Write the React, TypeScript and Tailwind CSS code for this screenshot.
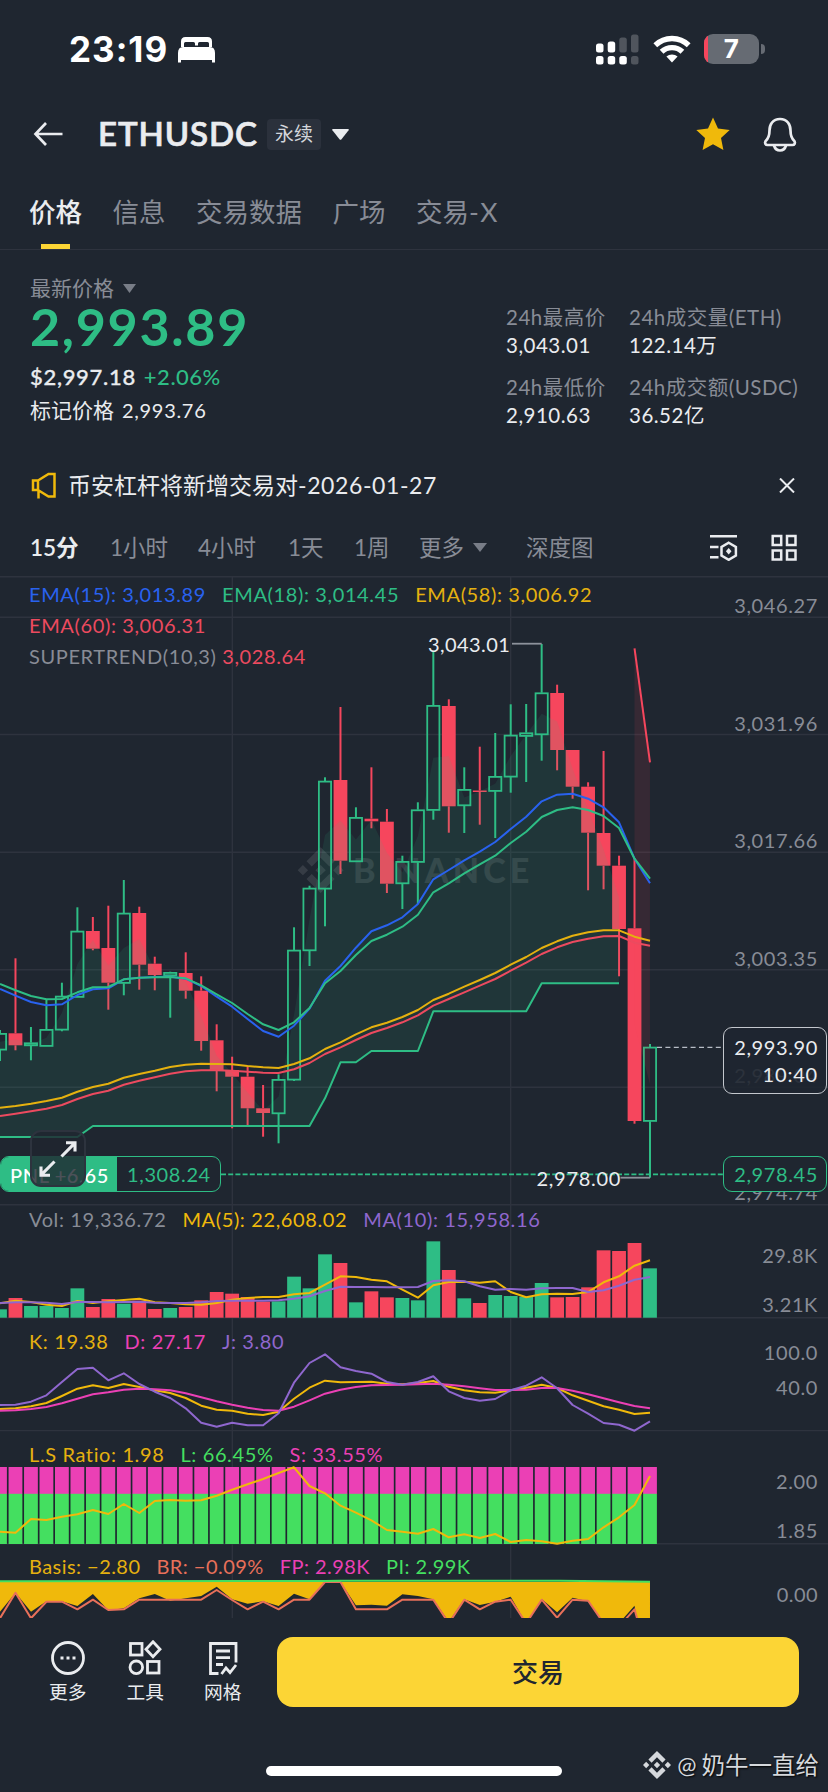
import type { ReactNode } from 'react';

type Candle = {
    up: boolean;
    high: number;
    top: number;
    bottom: number;
    low: number;
};

const STEP = 15.476;
const xAt = (i: number) => i * STEP;

const GREEN = '#2ebd85';
const RED = '#f6465d';
const GRID = '#2e333e';

// [direction, high, body top, body bottom, low]
const rawCandles: [number, number, number, number, number][] = [
    [1, 1030, 1033.3, 1050, 1061],
    [0, 958.3, 1033.3, 1045.3, 1050.3],
    [1, 1027, 1042.7, 1045.7, 1060.3],
    [1, 999.3, 1029.3, 1046.3, 1046.3],
    [1, 982.7, 996, 1030, 1031.3],
    [1, 907.3, 931, 997.3, 997.3],
    [0, 917, 931, 948.7, 950.3],
    [0, 905.7, 948, 982.7, 1009.7],
    [1, 880, 913, 983.3, 995.3],
    [0, 906.7, 913, 964.7, 989.7],
    [0, 956.7, 963.7, 975, 990.3],
    [1, 971.7, 972.3, 975.7, 1017.7],
    [0, 952.3, 973, 990.7, 998.7],
    [0, 976.3, 990.7, 1041, 1050.7],
    [0, 1024.3, 1040.3, 1071, 1091.3],
    [0, 1056.7, 1070, 1076.7, 1128.3],
    [0, 1066.7, 1076.7, 1108.3, 1126],
    [0, 1085, 1108.3, 1113, 1136.7],
    [1, 1074.3, 1079.3, 1113.7, 1143.3],
    [1, 927.3, 950, 1080, 1081],
    [1, 885.7, 888, 950.7, 966],
    [1, 777.3, 781, 889, 926.3],
    [0, 707, 780, 860.7, 874],
    [1, 807.3, 817.3, 861.7, 861.7],
    [0, 767.3, 818.7, 821.3, 828.3],
    [0, 809, 821.7, 883.7, 893],
    [1, 855.7, 861.3, 883.7, 909],
    [1, 802.3, 809.7, 862.3, 904],
    [1, 651.7, 705.3, 810.3, 819.7],
    [0, 699.3, 706, 806.3, 832.7],
    [1, 767.3, 789.3, 805.7, 833],
    [0, 746.7, 790.5, 792, 824.7],
    [1, 733, 776.3, 791.3, 838],
    [1, 704.3, 735, 777, 792.7],
    [1, 704, 732.7, 736.3, 782],
    [1, 644, 692.7, 734.7, 760.7],
    [0, 684.7, 693, 750, 770.3],
    [0, 750, 750, 786.7, 798.7],
    [0, 782.3, 786.7, 832.7, 890.3],
    [0, 751, 833, 865.7, 889.3],
    [0, 855.7, 865.7, 929, 976.3],
    [0, 858.3, 928.3, 1121, 1123.7],
    [1, 1044, 1047, 1121.3, 1177.7],
];
const candles: Candle[] = rawCandles.map(([d, high, top, bottom, low]) => ({ up: d === 1, high, top, bottom, low }));

const ema15 = [989, 995.7, 1002, 1005.3, 1004.3, 995, 989.3, 988.3, 979.3, 977.7, 977, 976.7, 978.7, 986, 996.7, 1006.7, 1019, 1031, 1036.7, 1025.7, 1008.7, 980.7, 966, 947.7, 931.3, 925.3, 917.3, 904, 879.3, 870, 860.3, 851.7, 842, 829, 816.7, 801.3, 794.7, 793.7, 798.7, 807.3, 822.3, 858.7, 883.3];
const ema18 = [984, 990.3, 996, 999.3, 999, 992.3, 987.3, 987, 979.3, 977.7, 977.3, 977, 978.3, 985.3, 994.3, 1003, 1014, 1024.3, 1030, 1022.3, 1008, 983.3, 971, 955, 941, 934.7, 926.7, 914.7, 892.3, 883.3, 873.3, 864.3, 855.7, 843, 831.7, 817, 810, 807.3, 810, 816, 828, 858.7, 878.7];
const ema58 = [1107.7, 1106, 1103.7, 1101, 1097.7, 1091.7, 1087, 1083.7, 1077.7, 1074, 1070.7, 1067, 1064.7, 1063.7, 1064, 1064.3, 1066, 1067.3, 1068, 1064, 1058.3, 1049, 1042.3, 1034.3, 1027.3, 1022.7, 1017, 1010, 1000, 993.7, 986.7, 980, 973, 964.7, 957, 948, 941.3, 935.7, 932.3, 930.3, 930.3, 936.7, 940.7];
const ema60 = [1116, 1113.7, 1111.3, 1108.7, 1105, 1099, 1094, 1090.7, 1084.7, 1080.7, 1077.3, 1073.7, 1071.3, 1070.3, 1070.3, 1070.7, 1071.7, 1072.7, 1073, 1069.3, 1063, 1054, 1047.3, 1040, 1033, 1028, 1022.3, 1015.3, 1005.7, 999, 992.3, 985.7, 979, 970.7, 962.7, 954, 947.3, 942, 938.7, 936.3, 936, 942.7, 945.7];
const trend = [1137, 1137, 1137, 1137, 1137, 1137, 1126, 1126, 1126, 1126, 1126, 1126, 1126, 1126, 1126, 1126, 1126, 1126, 1126, 1126, 1126, 1098.3, 1062.3, 1062.3, 1051, 1051, 1051, 1051, 1011.3, 1011.3, 1011.3, 1011.3, 1011.3, 1011.3, 1011.3, 983.3, 983.3, 983.3, 983.3, 983.3, 983.3];

// Sub panel series are stored as thirds of a pixel below the panel origin
const from = (origin: number, values: number[]) => values.map((v) => origin + v / 3);

const volume = from(1200, [328, 294, 318, 318, 324, 265, 321, 297, 311, 302, 327, 324, 321, 301, 276, 281, 291, 305, 304, 230, 265, 163, 189, 307, 274, 292, 294, 301, 124, 210, 295, 309, 285, 288, 290, 249, 292, 291, 262, 151, 153, 129, 205]);
const ma5 = from(1200, [310, 302, 306, 314, 318, 303, 309, 304, 300, 296, 307, 309, 313, 314, 309, 299, 294, 291, 291, 283, 279, 254, 229, 231, 239, 244, 269, 293, 256, 246, 245, 248, 244, 276, 292, 283, 281, 282, 276, 247, 229, 197, 181]);
const ma10 = from(1200, [309, 307, 307, 308, 312, 306, 306, 307, 306, 305, 308, 309, 309, 307, 303, 302, 302, 302, 301, 296, 289, 273, 260, 261, 261, 262, 262, 261, 243, 241, 244, 259, 269, 267, 269, 265, 264, 264, 276, 271, 257, 239, 231]);

const lineK = from(1200, [627, 625, 619, 609, 588, 566, 556, 564, 552, 561, 571, 579, 594, 617, 629, 632, 641, 645, 635, 596, 563, 542, 547, 546, 545, 551, 553, 549, 543, 560, 571, 577, 578, 571, 563, 554, 564, 586, 602, 619, 629, 642, 638]);
const lineD = from(1200, [632, 631, 627, 621, 610, 596, 583, 577, 569, 566, 568, 571, 580, 592, 604, 614, 623, 630, 632, 620, 601, 581, 569, 561, 556, 555, 554, 553, 551, 554, 559, 565, 570, 570, 569, 564, 564, 572, 583, 595, 607, 618, 625]);
const lineJ = from(1200, [615, 614, 605, 586, 546, 507, 503, 541, 520, 552, 575, 594, 625, 668, 680, 668, 676, 676, 640, 548, 489, 463, 502, 513, 521, 546, 554, 546, 529, 574, 594, 602, 597, 571, 557, 532, 565, 615, 641, 669, 674, 692, 664]);

const ratio = from(1430, [305, 308, 267, 270, 260, 253, 240, 252, 222, 249, 213, 210, 212, 211, 197, 179, 163, 147, 129, 112, 168, 190, 227, 248, 271, 300, 305, 311, 297, 322, 313, 324, 312, 336, 330, 334, 341, 332, 327, 292, 262, 225, 138]);
const basis = from(1430, [545, 488, 545, 514, 514, 528, 492, 541, 535, 505, 492, 512, 505, 498, 470, 508, 521, 514, 528, 491, 508, 456, 456, 526, 524, 527, 493, 498, 508, 575, 508, 525, 515, 500, 580, 507, 547, 503, 514, 577, 580, 527, 800]);
const basisRate = from(1430, [565, 488, 565, 515, 515, 538, 509, 540, 538, 509, 509, 509, 509, 509, 480, 510, 538, 515, 538, 509, 509, 456, 456, 538, 538, 538, 509, 509, 509, 580, 509, 538, 515, 509, 580, 509, 563, 509, 512, 580, 590, 538, 700]);

const toPoints = (ys: number[], start = 0) => ys.map((y, i) => `${xAt(i + start).toFixed(1)},${y.toFixed(1)}`).join(' ');

const mids = candles.map((c) => (c.top + c.bottom) / 2);
const trendArea = `${toPoints(mids.slice(0, 41))} ${trend.map((y, i) => `${xAt(i).toFixed(1)},${y}`).reverse().join(' ')}`;
const basisArea = `0,1582 ${toPoints(basis)} ${xAt(42)},1582`;

const BINANCE =
    'M16.624 13.9202l2.7175 2.7154-7.353 7.353-7.353-7.352 2.7175-2.7164 4.6355 4.6595 4.6356-4.6595zm4.6366-4.6366L24 12l-2.7154 2.7164L18.5682 12l2.6924-2.7164zm-9.272.001l2.7163 2.6914-2.7164 2.7174v-.001L9.2721 12l2.7164-2.7154zm-9.2722-.001L5.4088 12l-2.6914 2.6924L0 12l2.7164-2.7164zM11.9885.0115l7.353 7.329-2.7174 2.7154-4.6356-4.6356-4.6355 4.6595-2.7174-2.7154 7.353-7.353z';

function Line({ ys, color, width = 2 }: { ys: number[]; color: string; width?: number }) {
    return <polyline points={toPoints(ys)} fill="none" stroke={color} strokeWidth={width} strokeLinejoin="round" />;
}

function ChartCanvas() {
    return (
        <svg className="absolute inset-0 h-full w-full" viewBox="0 576 828 1042">
            {/* Cuadrícula */}
            {[576.7, 617.3, 734.5, 852.3, 969.7, 1087.3, 1204.7, 1317.7, 1430.6, 1543.7].map((y) => (
                <line key={y} x1="0" x2="828" y1={y} y2={y} stroke={GRID} strokeWidth="1.4" />
            ))}
            {[232.3, 510.7].map((x) => (
                <line key={x} x1={x} x2={x} y1="576" y2="1618" stroke={GRID} strokeWidth="1.4" />
            ))}

            <g fill="#fff" opacity="0.1">
                <path d={BINANCE} transform="translate(297.7 847.3) scale(1.91)" />
                <text x="353" y="883" fontFamily="Lato, sans-serif" fontWeight="900" fontSize="34" textLength="177">
                    BINANCE
                </text>
            </g>

            {/* Velas */}
            {candles.map((c, i) => {
                const x = xAt(i);
                const color = c.up ? GREEN : RED;
                return (
                    <g key={i} stroke={color} strokeWidth="2">
                        {c.top > c.high && <line x1={x} x2={x} y1={c.high} y2={c.top} />}
                        {c.low > c.bottom && <line x1={x} x2={x} y1={c.bottom} y2={c.low} />}
                        {c.up ? (
                            <rect x={x - 6.1} y={c.top + 0.6} width="12.2" height={c.bottom - c.top - 1} fill="none" strokeWidth="1.8" />
                        ) : (
                            <rect x={x - 6.9} y={c.top} width="13.8" height={c.bottom - c.top} fill={RED} stroke="none" />
                        )}
                    </g>
                );
            })}

            <polygon points={trendArea} fill={GREEN} opacity="0.11" />
            <polygon points={`${xAt(41)},648.3 ${xAt(42)},762.3 ${xAt(42)},${mids[42]} ${xAt(41)},${mids[41]}`} fill={RED} opacity="0.11" />

            <Line ys={ema15} color="#2962ef" />
            <Line ys={ema18} color={GREEN} />
            <Line ys={ema58} color="#e5b10f" />
            <Line ys={ema60} color="#ec4a5f" />
            <Line ys={trend} color={GREEN} />
            <line x1={xAt(41)} y1="648.3" x2={xAt(42)} y2="762.3" stroke={RED} strokeWidth="2" />

            <line x1="221" x2="723" y1="1174.3" y2="1174.3" stroke={GREEN} strokeWidth="1.7" strokeDasharray="5 2.2" />
            <line x1="657" x2="723" y1="1047.4" y2="1047.4" stroke="#b7bdc6" strokeWidth="1.4" strokeDasharray="5 3.4" />

            <g fontFamily="Lato, sans-serif" fontSize="20" fill="#eaecef" stroke="none">
                <text x="428" y="651.7" textLength="82.5">3,043.01</text>
                <text x="536.5" y="1185.7" textLength="84.5">2,978.00</text>
            </g>
            <line x1="512" x2="541.7" y1="643.7" y2="643.7" stroke="#8d929b" strokeWidth="1.8" />
            <line x1="620.5" x2="650" y1="1177.7" y2="1177.7" stroke="#8d929b" strokeWidth="1.8" />

            {/* Volumen */}
            {volume.map((y, i) => (
                <rect key={i} x={xAt(i) - 6.9} y={y} width="13.8" height={1317.7 - y} fill={candles[i].up ? GREEN : RED} />
            ))}
            <Line ys={ma5} color="#f0b90b" />
            <Line ys={ma10} color="#8f67ce" />

            <Line ys={lineK} color="#f0b90b" />
            <Line ys={lineD} color="#eb40b5" />
            <Line ys={lineJ} color="#8f67ce" />

            {/* Largos / cortos */}
            {ratio.map((_, i) => (
                <g key={i}>
                    <rect x={xAt(i) - 6.9} y="1467" width="13.8" height="27" fill="#eb40b5" />
                    <rect x={xAt(i) - 6.9} y="1493.8" width="13.8" height="50.2" fill="#44df60" />
                </g>
            ))}
            <Line ys={ratio} color="#f0b90b" />

            <polygon points={basisArea} fill="#f0b90b" />
            <Line ys={basisRate} color="#e8705a" />
            <polyline points="0,1581.3 325,1581 340,1580.7 560,1580.7 650,1581.8" fill="none" stroke="#44df60" strokeWidth="2" />
        </svg>
    );
}

function Legend({ children }: { children: ReactNode }) {
    return <div className="relative flex flex-wrap gap-x-[16px] pt-[3px] pl-[29px] leading-[31px]">{children}</div>;
}

function AxisLabel({ top, children }: { top: number; children: ReactNode }) {
    return (
        <span className="absolute right-[10px] leading-[20px] text-[#888c96]" style={{ top: top - 11.5 }}>
            {children}
        </span>
    );
}

function StatusBar() {
    return (
        <div className="flex h-[100px] items-center text-white">
            <span className="ml-[69px] w-[109px] pb-[1px] font-['Inter'] text-[35px] font-bold tracking-[1px]">23:19</span>
            <svg className="h-[26px] w-[37px]" viewBox="0 0 37 26" fill="currentColor">
                <path d="M3 10V4.5Q3 0 7.5 0h22Q34 0 34 4.500V10h-3V6.500Q31 5 29.500 5h-8Q20 5 20 6.500V8.500h-3V6.500Q17 5 15.500 5h-8Q6 5 6 6.500V10z" />
                <path d="M0 16q0-6 5-6h27q5 0 5 6v9.500h-3V23H3v2.500H0z" />
            </svg>
            <svg className="mb-[2px] ml-[381px] h-[31px] w-[43px]" viewBox="0 0 43 31" fill="currentColor">
                <rect x="0" y="9.500" width="7.500" height="9" rx="2.500" />
                <rect x="11.700" y="7.500" width="7.500" height="11" rx="2.500" />
                <rect x="23.300" y="3.500" width="7.500" height="15" rx="2.500" opacity="0.22" />
                <rect x="35" y="0.500" width="7.500" height="18" rx="2.500" opacity="0.22" />
                <rect x="0" y="22" width="7.500" height="8.500" rx="2.500" />
                <rect x="11.700" y="22" width="7.500" height="8.500" rx="2.500" />
                <rect x="23.300" y="22" width="7.500" height="8.500" rx="2.500" />
                <rect x="35" y="22" width="7.500" height="8.500" rx="2.500" opacity="0.22" />
            </svg>
            <svg className="mb-[3px] ml-[14px] h-[28px] w-[38px]" viewBox="0 0 38 28" fill="none" stroke="currentColor" strokeWidth="5.400">
                <path d="M2.300 10.300a24 24 0 0 1 33.400 0" />
                <path d="M8.600 16.800a15 15 0 0 1 20.800 0" />
                <path d="M19 27.500l-5.600-6a8.500 8.500 0 0 1 11.200 0z" fill="currentColor" stroke="none" />
            </svg>
            <div className="relative mb-[2px] ml-[13px] flex h-[30px] w-[55px] items-center justify-center overflow-hidden rounded-[9px] bg-[#666b73]">
                <span className="absolute inset-y-0 left-0 w-[4px] bg-[#f6465d]"></span>
                <span className="font-['Inter'] text-[26px] leading-none font-bold">7</span>
            </div>
            <span className="mb-[2px] ml-[2px] h-[10px] w-[4px] rounded-r-full bg-[#666b73]"></span>
        </div>
    );
}

function Header() {
    return (
        <header className="flex h-[68px] items-center text-[#eaecef]">
            <svg className="ml-[33px] h-[26px] w-[30px]" viewBox="0 0 30 26" fill="none" stroke="currentColor" strokeWidth="2.700">
                <path d="M29.500 13H2.500M13 2L2.500 13L13 24" />
            </svg>
            <h1 className="ml-[35px] w-[162px] pb-[2px] text-[33px] leading-none font-semibold tracking-[0.900px] [-webkit-text-stroke:0.700px]">ETHUSDC</h1>
            <span className="ml-[7px] flex h-[31px] w-[54px] items-center justify-center rounded-[4px] bg-[#2b313c] text-[19px] tracking-normal text-[#d3d6db]">永续</span>
            <svg className="ml-[11px] h-[11px] w-[17px]" viewBox="0 0 17 11" fill="currentColor">
                <path d="M1 0h15q1.500 0 .6 1.200L9.500 10.200q-1 1.200-2 0L.4 1.200Q-.5 0 1 0z" />
            </svg>
            <svg className="ml-[346px] h-[34px] w-[36px]" viewBox="0 0 36 34" fill="#f0b90b">
                <path d="M18 .5l5 11 11.700 1.400-8.700 8.200 2.400 12L18 27.200 7.600 33.100l2.400-12L1.300 12.900 13 11.500z" />
            </svg>
            <svg className="ml-[32px] h-[35px] w-[34px]" viewBox="0 0 34 35" fill="none" stroke="currentColor" strokeWidth="2.700" strokeLinejoin="round">
                <path d="M17 2C9.800 2 6.500 7.500 6.500 13.500C6.500 20 5 22 2.500 24.200C1.500 26 2.500 28 4.500 28H29.500C31.500 28 32.500 26 31.500 24.200C29 22 27.500 20 27.500 13.500C27.500 7.500 24.200 2 17 2Z" />
                <path d="M11 28.500q1.500 5 6 5t6-5" />
            </svg>
        </header>
    );
}

function Tabs() {
    return (
        <nav className="flex h-[82px] gap-[30.500px] border-b border-[#2e333e] pt-[22px] pl-[29px] text-[26.500px] leading-[44px] tracking-normal text-[#888c96]">
            <div className="relative font-medium text-[#eaecef]">
                价格
                <span className="absolute bottom-0 left-[12px] h-[5px] w-[29px] bg-[#fcd535]"></span>
            </div>
            <div>信息</div>
            <div>交易数据</div>
            <div>广场</div>
            <div>
                交易<span className="tracking-[1.500px]">-X</span>
            </div>
        </nav>
    );
}

function Stat({ label, value }: { label: string; value: string }) {
    return (
        <div>
            <p className="text-[20.500px] text-[#888c96]">{label}</p>
            <p>{value}</p>
        </div>
    );
}

function PriceSummary() {
    return (
        <section className="flex h-[198px] text-[20.500px] text-[#eaecef]">
            <div className="ml-[30px] w-[476px] pt-[24px]">
                <div className="flex h-[28px] items-center text-[21px] tracking-normal text-[#888c96]">
                    最新价格
                    <svg className="ml-[9px] h-[9px] w-[13px]" viewBox="0 0 13 9" fill="#787d87">
                        <path d="M0 0h13L6.500 9z" />
                    </svg>
                </div>
                <p className="h-[50px] text-[52px] leading-[49px] font-bold tracking-[1.700px] text-[#2ebd85]">2,993.89</p>
                <p className="mt-[10px] flex gap-[8px] text-[22px] leading-[30px] font-medium">
                    <span className="tracking-[0.700px] [-webkit-text-stroke:0.300px]">$2,997.18</span>
                    <span className="tracking-[0.500px] text-[#2ebd85]">+2.06%</span>
                </p>
                <p className="flex gap-[8px] leading-[36px]">
                    <span className="text-[21px] tracking-normal">标记价格</span>
                    <span className="text-[20px] tracking-[0.700px]">2,993.76</span>
                </p>
            </div>
            <div className="grid w-[322px] grid-cols-[123px_1fr] content-start gap-y-[14px] pt-[53px] leading-[28px] whitespace-nowrap">
                <Stat label="24h最高价" value="3,043.01" />
                <Stat label="24h成交量(ETH)" value="122.14万" />
                <Stat label="24h最低价" value="2,910.63" />
                <Stat label="24h成交额(USDC)" value="36.52亿" />
            </div>
        </section>
    );
}

function Notice() {
    return (
        <div className="flex h-[75px] items-center text-[#eaecef]">
            <svg className="ml-[31px] h-[27px] w-[26px]" viewBox="0 0 26 27" fill="none" stroke="#f0b90b" strokeWidth="2.500">
                <path d="M7 8.500H2v9.500H7zM7 8.500L17.500 2H23.500V24.500H17.500L7 18M7.500 18V26.500" />
            </svg>
            <p className="ml-[11px] text-[23px] leading-none tracking-normal">
                币安杠杆将新增交易对<span className="tracking-[0.600px]">-2026-01-27</span>
            </p>
            <svg className="mr-[33px] ml-auto h-[15px] w-[16px]" viewBox="0 0 16 15" fill="none" stroke="currentColor" strokeWidth="2">
                <path d="M1 .5l14 14M15 .5l-14 14" />
            </svg>
        </div>
    );
}

function Intervals() {
    return (
        <div className="flex h-[53px] items-center pb-[4px] text-[22.500px] leading-[49px] tracking-normal whitespace-nowrap text-[#888c96]">
            <span className="ml-[30px] w-[80px] font-semibold text-[#eaecef]">15分</span>
            <span className="w-[88px]">1小时</span>
            <span className="w-[90px]">4小时</span>
            <span className="w-[66px]">1天</span>
            <span className="w-[65px]">1周</span>
            <span className="flex w-[107px] items-center gap-[9px]">
                更多
                <svg className="h-[9px] w-[14px]" viewBox="0 0 14 9" fill="#787d87">
                    <path d="M0 0h14L7 9z" />
                </svg>
            </span>
            <span>深度图</span>
            <svg className="ml-auto h-[27px] w-[28px]" viewBox="0 0 28 27" fill="none" stroke="#eaecef" strokeWidth="2.500">
                <path d="M0 2.200H27M0 13H8.500M0 23.300H8.500" />
                <path d="M18.700 8.700l7.200 4.300v8.500l-7.200 4.300-7.200-4.300v-8.500z" />
                <path d="M18.700 14l2.800 3.200-2.800 3.200-2.800-3.200z" fill="#eaecef" stroke="none" />
            </svg>
            <svg className="mr-[31px] ml-[33px] h-[27px] w-[26px]" viewBox="0 0 26 27" fill="none" stroke="#eaecef" strokeWidth="2.500">
                <rect x="1.700" y="2" width="8.500" height="9" />
                <rect x="16" y="2" width="8.500" height="9" />
                <rect x="1.700" y="16.500" width="8.500" height="9" />
                <rect x="16" y="16.500" width="8.500" height="9" />
            </svg>
        </div>
    );
}

function Charts() {
    return (
        <section className="relative h-[1042px] text-[20px] tracking-[0.620px]">
            <ChartCanvas />
            <div className="relative h-[629px]">
                <Legend>
                    <span className="text-[#2962ef]">EMA(15): 3,013.89</span>
                    <span className="text-[#2ebd85]">EMA(18): 3,014.45</span>
                    <span className="text-[#e5b10f]">EMA(58): 3,006.92</span>
                    <span className="w-full text-[#ec4a5f]">EMA(60): 3,006.31</span>
                    <span className="text-[#888c96]">
                        SUPERTREND(10,3) <span className="text-[#ec4a5f]">3,028.64</span>
                    </span>
                </Legend>
                <AxisLabel top={30.5}>3,046.27</AxisLabel>
                <AxisLabel top={148}>3,031.96</AxisLabel>
                <AxisLabel top={265}>3,017.66</AxisLabel>
                <AxisLabel top={383}>3,003.35</AxisLabel>
                <AxisLabel top={500.5}>2,989.04</AxisLabel>
                <AxisLabel top={617}>2,974.74</AxisLabel>

                <div className="absolute top-[451px] right-[1px] flex h-[67px] w-[104px] flex-col items-end justify-center rounded-[9px] border-[1.500px] border-[#c3c7cd] bg-[#1f2630]/88 pr-[8px] leading-[27px] text-[#eaecef]">
                    <span>2,993.90</span>
                    <span className="tracking-[0.800px]">10:40</span>
                </div>
                <div className="absolute top-[580px] right-[1px] flex h-[36px] w-[104px] items-center justify-end rounded-[9px] border border-[#2ebd85] bg-[#1f2630] pr-[8px] text-[#2ebd85]">2,978.45</div>

                <div className="absolute top-[580px] left-0 flex h-[36px] w-[221px] items-center overflow-hidden rounded-[9px] border border-[#2ebd85] bg-[#1f2630] leading-[36px] text-[#2ebd85]">
                    <span className="h-full w-[116px] bg-[#2ebd85] pl-[9px] font-medium whitespace-nowrap text-white">PNL +6.65</span>
                    <span className="pl-[10px]">1,308.24</span>
                </div>
                <div className="absolute top-[554px] left-[30px] flex h-[57px] w-[56px] items-center justify-center rounded-[11px] border-2 border-[#2d333e] bg-[#1f2630]/80">
                    <svg className="h-[36px] w-[38px]" viewBox="0 0 38 36" fill="none" stroke="#eaecef" strokeWidth="3.100">
                        <path d="M22.500 15.500L36 1.800M27 1.800H36V10.500" />
                        <path d="M15.500 20.500L2 34.200M2 25.500V34.200H11" />
                    </svg>
                </div>
            </div>

            <div className="relative h-[113px]">
                <div className="h-[31px] -translate-y-[4.500px]">
                    <Legend>
                        <span className="text-[#888c96]">Vol: 19,336.72</span>
                        <span className="text-[#f0b90b]">MA(5): 22,608.02</span>
                        <span className="text-[#8f67ce]">MA(10): 15,958.16</span>
                    </Legend>
                </div>
                <AxisLabel top={51.5}>29.8K</AxisLabel>
                <AxisLabel top={100.5}>3.21K</AxisLabel>
            </div>

            <div className="relative h-[113px] pt-[5px]">
                <Legend>
                    <span className="text-[#e5b10f]">K: 19.38</span>
                    <span className="text-[#eb40b5]">D: 27.17</span>
                    <span className="text-[#8f67ce]">J: 3.80</span>
                </Legend>
                <AxisLabel top={35}>100.0</AxisLabel>
                <AxisLabel top={70.5}>40.0</AxisLabel>
            </div>

            <div className="relative h-[113px] pt-[5px]">
                <Legend>
                    <span className="text-[#e5b10f]">L.S Ratio: 1.98</span>
                    <span className="text-[#44df60]">L: 66.45%</span>
                    <span className="text-[#eb40b5]">S: 33.55%</span>
                </Legend>
                <AxisLabel top={51.5}>2.00</AxisLabel>
                <AxisLabel top={100.5}>1.85</AxisLabel>
            </div>

            <div className="relative h-[74px] pt-[4px] tracking-[0.450px]">
                <Legend>
                    <span className="text-[#e5b10f]">Basis: −2.80</span>
                    <span className="text-[#e8705a]">BR: −0.09%</span>
                    <span className="text-[#eb40b5]">FP: 2.98K</span>
                    <span className="text-[#44df60]">PI: 2.99K</span>
                </Legend>
                <AxisLabel top={51.5}>0.00</AxisLabel>
            </div>
        </section>
    );
}

function Action({ label, children }: { label: string; children: ReactNode }) {
    return (
        <div className="flex w-[77.500px] flex-col items-center">
            <svg className="h-[36px] w-[36px]" viewBox="0 0 36 36" fill="none" stroke="currentColor" strokeWidth="2.800">
                {children}
            </svg>
            <span className="mt-[4px] text-[18.700px] leading-[24px] tracking-normal">{label}</span>
        </div>
    );
}

function BottomBar() {
    return (
        <footer className="relative h-[174px] text-[#eaecef]">
            <div className="flex items-start pt-[19px]">
                <div className="ml-[29px] flex pt-[3px]">
                    <Action label="更多">
                        <circle cx="18" cy="18" r="15.500" />
                        <path d="M10.500 18h3M16.500 18h3M22.500 18h3" strokeWidth="3" />
                    </Action>
                    <Action label="工具">
                        <rect x="3.500" y="3.500" width="11.500" height="11.500" />
                        <path d="M26 1.800l7 7.400-7 7.400-7-7.400z" />
                        <circle cx="9.300" cy="27.300" r="6.300" />
                        <rect x="20.500" y="21.500" width="11.500" height="11.500" />
                    </Action>
                    <Action label="网格">
                        <path d="M31 22.500V3.500H5.500V33.500H13.500" />
                        <path d="M11 11h14M11 17.700h14M11 24.500h7" />
                        <path d="M16.500 34l4.500-6 4 4.500 6-7.500" />
                    </Action>
                </div>
                <button className="ml-[15.500px] h-[70px] w-[522px] rounded-[16px] bg-[#fcd535] text-[26px] font-medium tracking-normal text-[#202630]">交易</button>
            </div>
            <div className="mx-auto mt-[59px] h-[10px] w-[296px] rounded-full bg-white"></div>
            <div className="absolute right-[9px] bottom-[13px] flex items-center text-[23.500px] leading-[28px] tracking-normal text-[#d5d8dc] [text-shadow:1px_1px_2px_#000]">
                <svg className="mr-[6px] h-[28px] w-[28px]" viewBox="0 0 24 24" fill="currentColor">
                    <path d={BINANCE} />
                </svg>
                <span className="mr-[5px] text-[23px]">@</span>
                奶牛一直给
            </div>
        </footer>
    );
}

export default function App() {
    return (
        <div className="flex h-[1792px] w-[828px] flex-col overflow-hidden bg-[#1f2630] font-['Lato','Noto_Sans_CJK_SC',sans-serif] tracking-[0.500px]">
            <StatusBar />
            <Header />
            <Tabs />
            <PriceSummary />
            <Notice />
            <Intervals />
            <Charts />
            <BottomBar />
        </div>
    );
}
